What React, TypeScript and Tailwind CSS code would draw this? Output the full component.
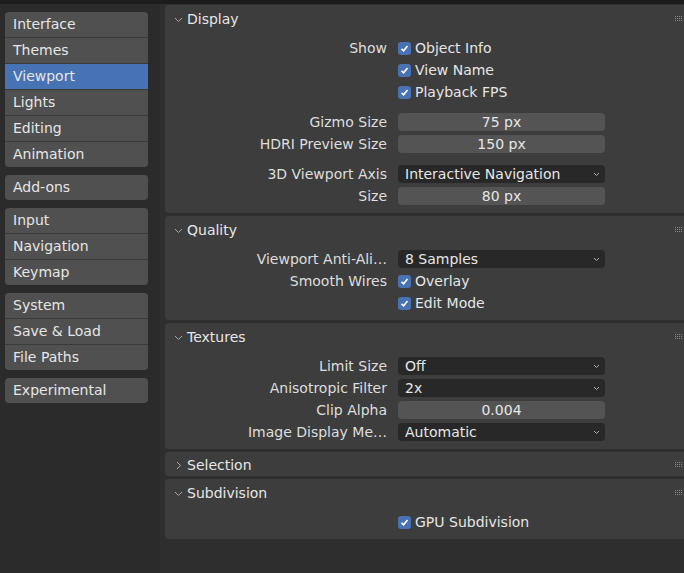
import React from 'react';

const navGroups = [
  ['Interface', 'Themes', 'Viewport', 'Lights', 'Editing', 'Animation'],
  ['Add-ons'],
  ['Input', 'Navigation', 'Keymap'],
  ['System', 'Save & Load', 'File Paths'],
  ['Experimental'],
];

function Chevron({ open }: { open: boolean }) {
  return (
    <svg width="9" height="9" viewBox="0 0 9 9" className="shrink-0">
      {open ? (
        <polyline points="1,3 4.5,6.5 8,3" fill="none" stroke="#a8a8a8" strokeWidth="1" />
      ) : (
        <polyline points="3,1 6.5,4.5 3,8" fill="none" stroke="#a8a8a8" strokeWidth="1" />
      )}
    </svg>
  );
}

function Grip() {
  return (
    <svg width="8" height="6" viewBox="0 0 8 6" className="shrink-0">
      {[0, 1, 2, 3].map((c) =>
        [0, 1, 2].map((r) => (
          <rect key={`${c}-${r}`} x={c * 2} y={r * 2} width="1" height="1" fill="#8a8a8a" />
        ))
      )}
    </svg>
  );
}

function Check({ label }: { label: string }) {
  return (
    <div className="flex items-center">
      <div className="w-[13px] h-[13px] rounded-[3px] bg-[#4772b3] flex items-center justify-center">
        <svg width="9" height="9" viewBox="0 0 9 9">
          <polyline points="1.5,4.8 3.6,6.8 7.5,2" fill="none" stroke="#ffffff" strokeWidth="1.6" />
        </svg>
      </div>
      <span className="ml-[4px] text-[#e6e6e6]">{label}</span>
    </div>
  );
}

function NumField({ value }: { value: string }) {
  return (
    <div className="w-full h-[18px] rounded-[4px] bg-[#545454] text-center leading-[18px] text-[#e6e6e6]">
      {value}
    </div>
  );
}

function Dropdown({ value }: { value: string }) {
  return (
    <div className="w-full h-[18px] rounded-[4px] bg-[#282828] pl-[7px] pr-[5px] flex items-center justify-between text-[#e6e6e6]">
      <span className="leading-[18px]">{value}</span>
      <svg width="7" height="5" viewBox="0 0 7 5">
        <polyline points="1,1 3.5,3.5 6,1" fill="none" stroke="#b0b0b0" strokeWidth="1" />
      </svg>
    </div>
  );
}

function Row({ label, children }: { label?: string; children: React.ReactNode }) {
  return (
    <div className="flex items-center h-[22px] pt-[2px]">
      <div className="w-[222px] text-right whitespace-nowrap text-[#dedede]">{label}</div>
      <div className="ml-[11px] w-[207px] flex items-center">{children}</div>
    </div>
  );
}

function Panel({
  title,
  open = true,
  children,
}: {
  title: string;
  open?: boolean;
  children?: React.ReactNode;
}) {
  return (
    <div className="bg-[#3d3d3d] rounded-l-[4px]">
      <div className={`flex items-center ${open ? 'h-[26px]' : 'h-[24px]'} pt-[2px] pl-[9px] pr-[1px]`}>
        <Chevron open={open} />
        <span className="ml-[4px] text-[#e6e6e6]">{title}</span>
        <div className="ml-auto">
          <Grip />
        </div>
      </div>
      {open && <div className="pt-[5px] pb-[7px]">{children}</div>}
    </div>
  );
}

export default function App() {
  return (
    <div
      className="w-[684px] h-[573px] overflow-hidden flex flex-col bg-[#2e2e2e] text-[14px] leading-none"
      style={{ fontFamily: '"DejaVu Sans", "Liberation Sans", sans-serif' }}
    >
      <div className="h-[4px] bg-[#1d1d1d] shrink-0" />
      <div className="flex flex-1 min-h-0">
        {/* Navigation sidebar */}
        <div className="w-[160px] shrink-0 bg-[#2b2b2b] pl-[5px] pt-[8px] flex flex-col gap-[8px]">
          {navGroups.map((group, gi) => (
            <div key={gi} className="w-[143px] rounded-[4px] overflow-hidden bg-[#3a3a3a] flex flex-col gap-[1px]">
              {group.map((item) => (
                <div
                  key={item}
                  className={`h-[25px] pl-[8px] pb-[1px] flex items-center text-[#e6e6e6] ${
                    item === 'Viewport' ? 'bg-[#4772b3]' : 'bg-[#505050]'
                  }`}
                >
                  {item}
                </div>
              ))}
            </div>
          ))}
        </div>

        {/* Settings panels */}
        <div className="flex-1 pl-[5px] pt-[1px] flex flex-col gap-[3px]">
          <Panel title="Display">
            <Row label="Show">
              <Check label="Object Info" />
            </Row>
            <Row>
              <Check label="View Name" />
            </Row>
            <Row>
              <Check label="Playback FPS" />
            </Row>
            <div className="h-[8px]" />
            <Row label="Gizmo Size">
              <NumField value="75 px" />
            </Row>
            <Row label="HDRI Preview Size">
              <NumField value="150 px" />
            </Row>
            <div className="h-[8px]" />
            <Row label="3D Viewport Axis">
              <Dropdown value="Interactive Navigation" />
            </Row>
            <Row label="Size">
              <NumField value="80 px" />
            </Row>
          </Panel>

          <Panel title="Quality">
            <Row label="Viewport Anti-Ali…">
              <Dropdown value="8 Samples" />
            </Row>
            <Row label="Smooth Wires">
              <Check label="Overlay" />
            </Row>
            <Row>
              <Check label="Edit Mode" />
            </Row>
          </Panel>

          <Panel title="Textures">
            <Row label="Limit Size">
              <Dropdown value="Off" />
            </Row>
            <Row label="Anisotropic Filter">
              <Dropdown value="2x" />
            </Row>
            <Row label="Clip Alpha">
              <NumField value="0.004" />
            </Row>
            <Row label="Image Display Me…">
              <Dropdown value="Automatic" />
            </Row>
          </Panel>

          <Panel title="Selection" open={false} />

          <Panel title="Subdivision">
            <Row>
              <Check label="GPU Subdivision" />
            </Row>
          </Panel>
        </div>
      </div>
    </div>
  );
}
